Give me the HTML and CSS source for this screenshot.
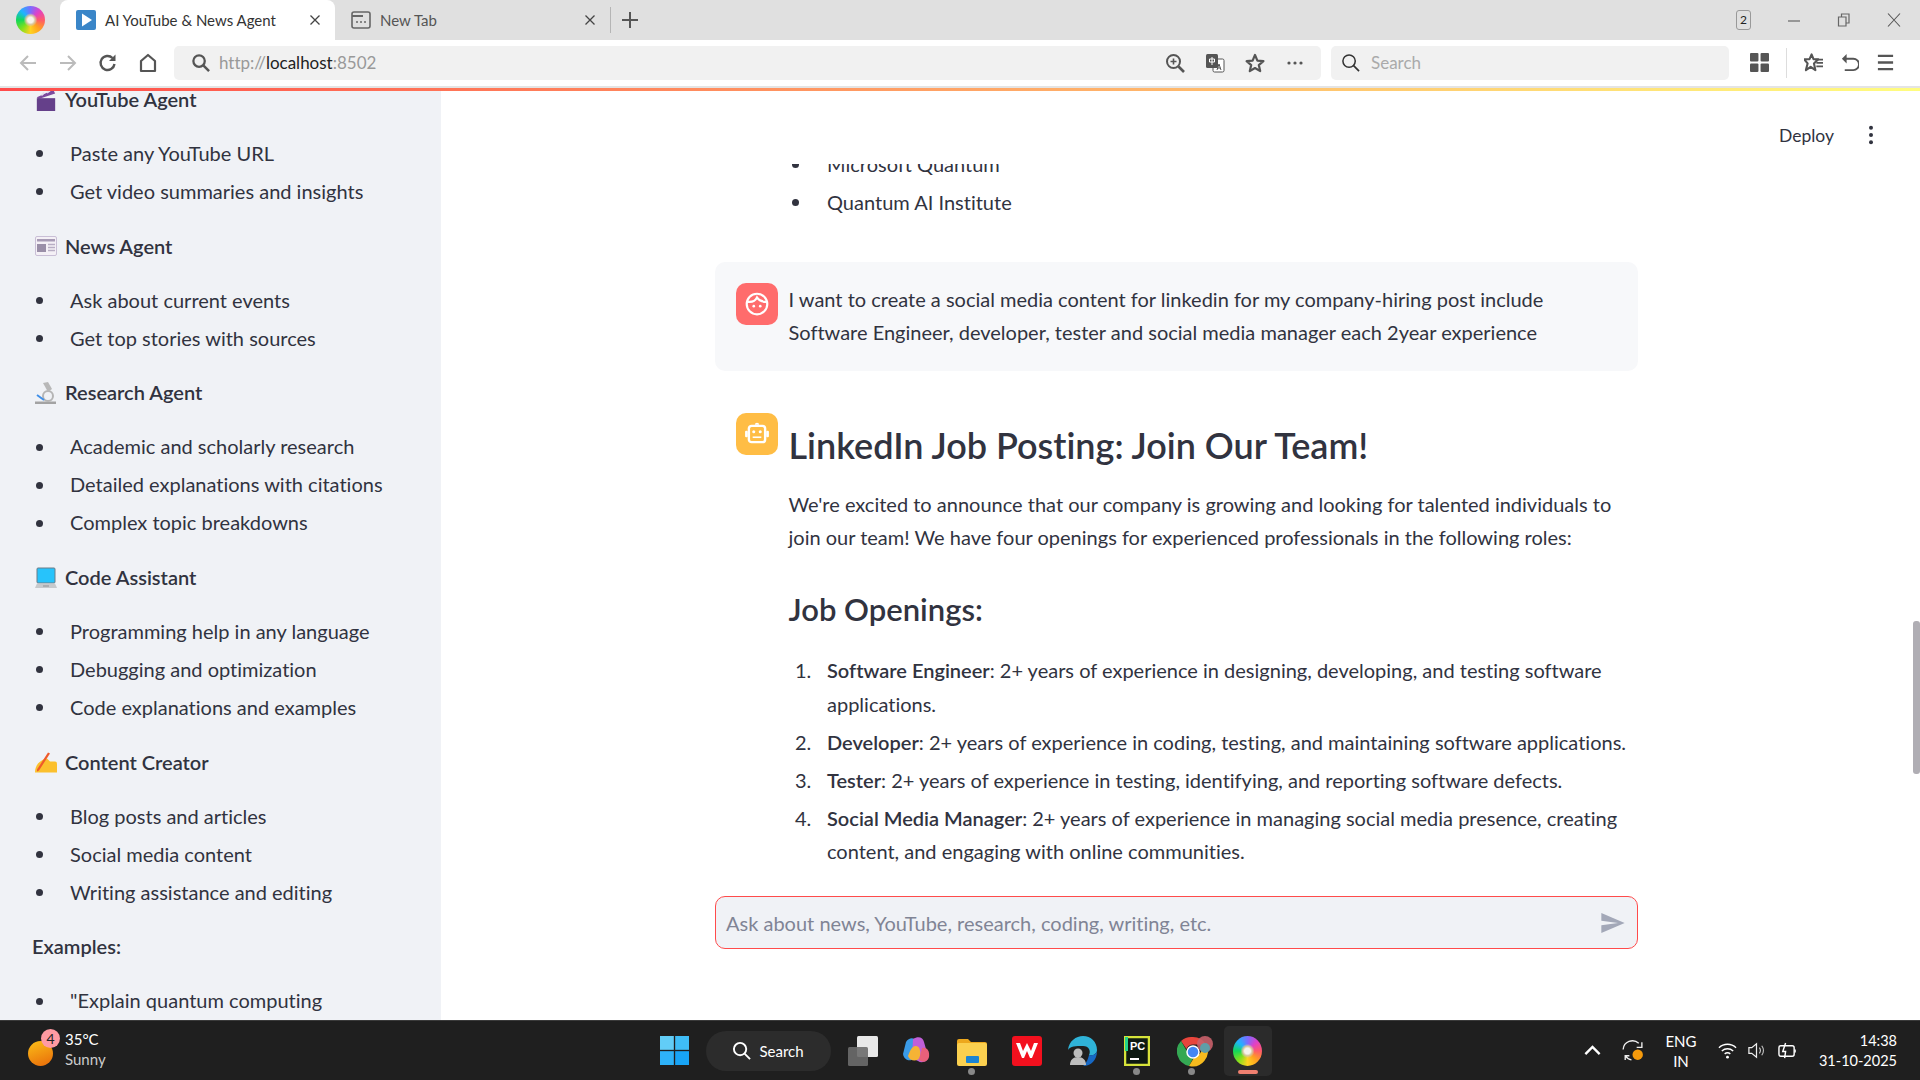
FILE: index.html

```html
<!DOCTYPE html>
<html lang="en">
<head>
    <meta charset="UTF-8">
    <title>AI YouTube &amp; News Agent</title>
    <link rel="stylesheet" href="styles.css">
</head>
<body>
    <div class="tabstrip">
        <div class="browser-logo"><div class="swirl"></div></div>
        <div class="tab tab-active">
            <svg class="tab-icon" viewBox="0 0 20 20"><rect width="20" height="20" rx="2" fill="#3a86c8"/><path d="M6 3.5 16 10 6 16.5z" fill="#fff"/></svg>
            <span class="tab-title">AI YouTube &amp; News Agent</span>
            <svg class="tab-close" viewBox="0 0 12 12"><path d="M1.5 1.5l9 9M10.5 1.5l-9 9" stroke="#444" stroke-width="1.3" fill="none"/></svg>
        </div>
        <div class="tab">
            <svg class="tab-icon" viewBox="0 0 20 20"><rect x="1" y="2" width="18" height="16" rx="2" fill="none" stroke="#666" stroke-width="1.6"/><path d="M1 6h11" stroke="#666" stroke-width="2"/><path d="M5 12h2M9 12h2M13 12h2" stroke="#666" stroke-width="1.6"/></svg>
            <span class="tab-title tab-title-dim">New Tab</span>
            <svg class="tab-close" viewBox="0 0 12 12"><path d="M1.5 1.5l9 9M10.5 1.5l-9 9" stroke="#444" stroke-width="1.3" fill="none"/></svg>
        </div>
        <div class="tab-sep"></div>
        <svg class="new-tab" viewBox="0 0 16 16"><path d="M8 0v16M0 8h16" stroke="#555" stroke-width="2"/></svg>
        <div class="window-controls">
            <span class="tab-count">2</span>
            <svg class="win-btn" viewBox="0 0 14 14"><path d="M1 8h12" stroke="#666" stroke-width="1.2"/></svg>
            <svg class="win-btn" viewBox="0 0 14 14"><path d="M1.5 4h7.5v9H1.5zM4.5 4V1h7.5v9H9" fill="none" stroke="#666" stroke-width="1.2"/></svg>
            <svg class="win-btn" viewBox="0 0 14 14"><path d="M1 .5l12 13M13 .5l-12 13" stroke="#555" stroke-width="1.1"/></svg>
        </div>
    </div>

    <div class="toolbar">
        <div class="nav-buttons">
            <svg class="nav-icon" viewBox="0 0 20 20"><path d="M18 10H3M10 3l-7 7 7 7" fill="none" stroke="#bbb" stroke-width="2"/></svg>
            <svg class="nav-icon" viewBox="0 0 20 20"><path d="M2 10h15M10 3l7 7-7 7" fill="none" stroke="#bbb" stroke-width="2"/></svg>
            <svg class="nav-icon" viewBox="0 0 20 20"><path d="M16.5 11a7 7 0 1 1-2-6" fill="none" stroke="#555" stroke-width="2.4"/><path d="M17.5 1.5v6.5h-6.5z" fill="#555"/></svg>
            <svg class="nav-icon" viewBox="0 0 20 20"><path d="M3 18V8l7-6 7 6v10z" fill="none" stroke="#555" stroke-width="2.2" stroke-linejoin="round"/></svg>
        </div>
        <div class="address-bar">
            <svg class="glass" viewBox="0 0 20 20"><circle cx="8.5" cy="8.5" r="6" fill="none" stroke="#555" stroke-width="2.4"/><path d="M13 13l6 6" stroke="#555" stroke-width="2.6"/></svg>
            <span class="url"><span class="url-dim">http://</span>localhost<span class="url-dim">:8502</span></span>
            <div class="address-icons">
                <svg class="addr-icon" viewBox="0 0 20 20"><circle cx="8.5" cy="8.5" r="6.5" fill="none" stroke="#555" stroke-width="2"/><path d="M13.5 13.5l5.5 5.5" stroke="#555" stroke-width="2.6"/><path d="M8.5 5.5v6M5.5 8.5h6" stroke="#555" stroke-width="1.6"/></svg>
                <svg class="addr-icon" viewBox="0 0 20 20"><rect x="8" y="6" width="11" height="13" rx="1.5" fill="#fff" stroke="#555"/><rect x="1" y="1" width="12" height="14" rx="1.5" fill="#555"/><path d="M7 4v8M4.5 6h5v3h-5z" fill="none" stroke="#fff"/><path d="M12 17l2-6 2 6M12.8 15h2.4" fill="none" stroke="#555"/></svg>
                <svg class="addr-icon" viewBox="0 0 20 20"><path d="M10 2l2.4 5.6 6 .5-4.6 4 1.4 6L10 15l-5.2 3.1 1.4-6-4.6-4 6-.5z" fill="none" stroke="#555" stroke-width="2.2" stroke-linejoin="round"/></svg>
                <svg class="addr-icon" viewBox="0 0 20 20"><circle cx="4" cy="10" r="1.6" fill="#555"/><circle cx="10" cy="10" r="1.6" fill="#555"/><circle cx="16" cy="10" r="1.6" fill="#555"/></svg>
            </div>
        </div>
        <div class="search-bar">
            <svg class="glass" viewBox="0 0 20 20"><circle cx="8.5" cy="8.5" r="6.5" fill="none" stroke="#333" stroke-width="1.6"/><path d="M13 13l6 6" stroke="#333" stroke-width="1.8"/></svg>
            <span class="search-text">Search</span>
        </div>
        <div class="tool-icons">
            <svg class="tool-icon" viewBox="0 0 18 18"><rect x="0" y="0" width="8" height="8" rx="1" fill="#555"/><rect x="10" y="0" width="8" height="8" rx="1" fill="#555"/><rect x="0" y="10" width="8" height="8" rx="1" fill="#555"/><rect x="10" y="10" width="8" height="8" rx="1" fill="#555"/></svg>
            <div class="tool-sep"></div>
            <svg class="tool-icon" viewBox="0 0 20 20"><path d="M8 1.500l2 5H15L10.500 11l1.500 7L7 14.500 2 18l1.800-7L0 6.500h5.800z" fill="none" stroke="#555" stroke-width="2.200" stroke-linejoin="round"/><path d="M12 7h8M13 10.500h7M13 14h7" stroke="#555" stroke-width="1.800"/></svg>
            <svg class="tool-icon" viewBox="0 0 20 20"><path d="M6 6h8a4.500 4.500 0 0 1 0 12H5" fill="none" stroke="#555" stroke-width="2"/><path d="M7 1L2 6l5 5z" fill="#555"/></svg>
            <svg class="tool-icon" viewBox="0 0 20 20"><path d="M2 3h16M2 10h16M2 17h16" stroke="#555" stroke-width="2.400"/></svg>
        </div>
    </div>
    <div class="decoration"></div>

    <div class="app">
        <aside class="sidebar">
            <div class="sidebar-inner">
                <h4 class="agent-title">
                    <svg class="emoji" viewBox="0 0 20 24"><path d="M0 9 18 1l2 4L2 11z" fill="#7c4a9e"/><path d="M5 7l3-3M11 4l3-2" stroke="#e6e0ee" stroke-width="2"/><rect y="10" width="20" height="14" fill="#65408a"/></svg>
                    YouTube Agent
                </h4>
                <ul class="side-list">
                    <li>Paste any YouTube URL</li>
                    <li>Get video summaries and insights</li>
                </ul>
                <h4 class="agent-title">
                    <svg class="emoji" viewBox="0 0 22 20"><rect x=".5" y=".5" width="21" height="19" rx="1.500" fill="#f4f0f6" stroke="#c9bfd6"/><rect x="2" y="3" width="18" height="2.500" fill="#a79bb5"/><rect x="2" y="8" width="9" height="8" fill="#9a8fa8"/><path d="M13 8.500h7M13 11.500h7M13 14.500h7" stroke="#b8aec4" stroke-width="1.500"/></svg>
                    News Agent
                </h4>
                <ul class="side-list">
                    <li>Ask about current events</li>
                    <li>Get top stories with sources</li>
                </ul>
                <h4 class="agent-title">
                    <svg class="emoji" viewBox="0 0 22 22"><rect y="19.500" width="21" height="2.500" fill="#a3a3a3"/><circle cx="13" cy="14" r="5" fill="none" stroke="#b5b5b5" stroke-width="2"/><path d="M8 1l5-1 4 7-4 3z" fill="#b8b8b8"/><path d="M2 13l7 5" stroke="#3f8fe8" stroke-width="2"/></svg>
                    Research Agent
                </h4>
                <ul class="side-list">
                    <li>Academic and scholarly research</li>
                    <li>Detailed explanations with citations</li>
                    <li>Complex topic breakdowns</li>
                </ul>
                <h4 class="agent-title">
                    <svg class="emoji" viewBox="0 0 22 21"><rect x="2" y=".5" width="18" height="15" rx="1" fill="#27c3fb" stroke="#6b7c88"/><path d="M2 16h18l2 4.500H0z" fill="#c6c9cc"/><path d="M8 18.500h6" stroke="#8d9196"/></svg>
                    Code Assistant
                </h4>
                <ul class="side-list">
                    <li>Programming help in any language</li>
                    <li>Debugging and optimization</li>
                    <li>Code explanations and examples</li>
                </ul>
                <h4 class="agent-title">
                    <svg class="emoji" viewBox="0 0 22 21"><path d="M3 12c3-3 6-5 9-5l3 3h5c1.500 0 2 1 2 3v8H0c0-4 1-6 3-9z" fill="#fbc02d"/><path d="M13 1l2 1L4 19l-2 1 0-2z" fill="#ef5a2a"/></svg>
                    Content Creator
                </h4>
                <ul class="side-list">
                    <li>Blog posts and articles</li>
                    <li>Social media content</li>
                    <li>Writing assistance and editing</li>
                </ul>
                <p class="examples-title">Examples:</p>
                <ul class="side-list">
                    <li>"Explain quantum computing</li>
                </ul>
            </div>
        </aside>

        <main class="main">
            <header class="app-header">
                <span class="deploy">Deploy</span>
                <svg class="kebab" viewBox="0 0 6 22"><circle cx="3" cy="3" r="2.200" fill="#31333f"/><circle cx="3" cy="11" r="2.200" fill="#31333f"/><circle cx="3" cy="19" r="2.200" fill="#31333f"/></svg>
            </header>

            <div class="chat-scroll">
                <div class="chat">
                    <ul class="chat-tail">
                        <li>Microsoft Quantum</li>
                        <li>Quantum AI Institute</li>
                    </ul>

                    <div class="message message-user">
                        <div class="avatar avatar-user">
                            <svg viewBox="0 0 24 24"><circle cx="12" cy="12" r="9.500" fill="none" stroke="#fff" stroke-width="2"/><path d="M3.500 10c4 .5 7-1 8.500-4 1.500 2.500 4.500 4 8.500 4" fill="none" stroke="#fff" stroke-width="2"/><circle cx="9" cy="14" r="1.200" fill="#fff"/><circle cx="15" cy="14" r="1.200" fill="#fff"/></svg>
                        </div>
                        <div class="message-body">
                            <p>I want to create a social media content for linkedin for my company-hiring post include Software Engineer, developer, tester and social media manager each 2year experience</p>
                        </div>
                    </div>

                    <div class="message">
                        <div class="avatar avatar-bot">
                            <svg viewBox="0 0 24 24"><path d="M12 1.500a2 2 0 0 1 2 2H10a2 2 0 0 1 2-2z" fill="#fff"/><rect x="4.500" y="4.500" width="15" height="15" rx="2.500" fill="none" stroke="#fff" stroke-width="2.200"/><rect x="1" y="9" width="2.500" height="6" rx="1" fill="#fff"/><rect x="20.500" y="9" width="2.500" height="6" rx="1" fill="#fff"/><circle cx="9" cy="10" r="1.400" fill="#fff"/><circle cx="15" cy="10" r="1.400" fill="#fff"/><path d="M8 15h8" stroke="#fff" stroke-width="1.500"/></svg>
                        </div>
                        <div class="message-body">
                            <h2 class="post-title">LinkedIn Job Posting: Join Our Team!</h2>
                            <p>We're excited to announce that our company is growing and looking for talented individuals to join our team! We have four openings for experienced professionals in the following roles:</p>
                            <h3 class="post-subtitle">Job Openings:</h3>
                            <ol class="job-list">
                                <li><div><strong>Software Engineer</strong>: 2+ years of experience in designing, developing, and testing software applications.</div></li>
                                <li><div><strong>Developer</strong>: 2+ years of experience in coding, testing, and maintaining software applications.</div></li>
                                <li><div><strong>Tester</strong>: 2+ years of experience in testing, identifying, and reporting software defects.</div></li>
                                <li><div><strong>Social Media Manager</strong>: 2+ years of experience in managing social media presence, creating content, and engaging with online communities.</div></li>
                            </ol>
                        </div>
                    </div>
                </div>
            </div>

            <div class="input-dock">
                <div class="chat-input">
                    <span class="placeholder">Ask about news, YouTube, research, coding, writing, etc.</span>
                    <svg class="send" viewBox="2 3 21 18"><path d="M2.010 21L23 12 2.010 3 2 10l15 2-15 2z" fill="#a3a8b8"/></svg>
                </div>
            </div>

            <div class="scroll-thumb"></div>
        </main>
    </div>

    <footer class="taskbar">
        <div class="task-left">
            <div class="weather-icon"><span class="weather-badge">4</span></div>
            <div class="weather-text">
                <span>35°C</span>
                <span class="weather-sub">Sunny</span>
            </div>
        </div>
        <div class="task-center">
            <svg class="start" viewBox="0 0 30 30"><rect width="14.300" height="14.300" fill="#62cdf7"/><rect x="15.700" width="14.300" height="14.300" fill="#3fbdf7"/><rect y="15.700" width="14.300" height="14.300" fill="#2eb2f8"/><rect x="15.700" y="15.700" width="14.300" height="14.300" fill="#18a4f6"/></svg>
            <div class="task-search">
                <svg viewBox="0 0 20 20"><circle cx="8.500" cy="8.500" r="6.500" fill="none" stroke="#fff" stroke-width="2"/><path d="M13 13l6 6" stroke="#fff" stroke-width="2"/></svg>
                <span>Search</span>
            </div>
            <svg class="task-app task-view" viewBox="0 0 30 30"><rect x="9" width="21" height="21" rx="1.500" fill="#e8e8e8"/><rect y="11" width="20" height="19" rx="1.500" fill="#6b6b6b" opacity=".9"/></svg>
            <div class="task-slot">
                <svg class="task-app" viewBox="0 0 30 30"><path d="M4 6c3-5 9-5 10 0l-3 16c-1 4-9 3-10-4z" fill="#3a9be8"/><path d="M11 3c5-3 10-2 11 3l4 14c1 5-6 8-10 5l-6-3z" fill="#c05fd8"/><path d="M6 20c3-8 5-10 8-10s5 4 4 10-10 6-12 0z" fill="#f5b335"/><path d="M20 12c4-1 8 2 7 9-1 5-7 6-10 3z" fill="#e8607a"/></svg>
            </div>
            <div class="task-slot task-running">
                <svg class="task-app" viewBox="0 0 30 30"><path d="M0 5a2 2 0 0 1 2-2h9l3 3h14a2 2 0 0 1 2 2v3H0z" fill="#eda81d"/><rect y="7" width="30" height="23" rx="2" fill="#fbd04f"/><rect x="9" y="20" width="13" height="7" rx="1" fill="#1b84d3"/></svg>
            </div>
            <div class="task-slot">
                <svg class="task-app" viewBox="0 0 30 30"><rect width="30" height="30" rx="3" fill="#f3101e"/><path d="M4 7l4 0 3 8 4-8 4 8 3-8 4 0-6 15h-2l-3-7-3 7h-2z" fill="#fff"/></svg>
            </div>
            <div class="task-slot">
                <svg class="task-app" viewBox="0 0 30 30"><path d="M1 14C2 5 9 0 16 0c8 0 14 6 14 14 0 4-4 6-8 5 2-4 0-9-6-9-7 0-13 0-15 4z" fill="#2fb3d8"/><path d="M22 19c3 1 7 0 8-4 0 9-6 15-14 15 2-1 5-6 6-11z" fill="#1668c4"/><circle cx="11" cy="17" r="4.500" fill="#bdbdbd"/><path d="M3 29c0-5 3-8 8-8s8 3 8 8z" fill="#bdbdbd"/></svg>
            </div>
            <div class="task-slot task-running">
                <svg class="task-app task-app-small" viewBox="0 0 26 30"><rect x="1" y="1" width="24" height="28" fill="#0e1a12" stroke="#d6e33a" stroke-width="2.500"/><rect x="1" y="1" width="3" height="14" fill="#22d48a"/><text x="6" y="14" font-size="11" font-weight="700" fill="#fff" font-family="Liberation Sans, sans-serif">PC</text><path d="M6 23h9" stroke="#fff" stroke-width="2"/></svg>
            </div>
            <div class="task-slot task-running">
                <svg class="task-app task-app-wide" viewBox="0 0 36 36"><path d="M16 4a15 15 0 0 1 13 7.500H16a7 7 0 0 0-6.500 4.500L4 8a15 15 0 0 1 12-4z" fill="#e8453c"/><path d="M4 8l7 12a7 7 0 0 0 6 3.500L12 33A15 15 0 0 1 4 8z" fill="#34a853"/><path d="M29 11.500A15 15 0 0 1 12 33l6-10a7 7 0 0 0 5-11.500z" fill="#f6bb1e"/><circle cx="16" cy="19" r="6" fill="#4285f4" stroke="#fff" stroke-width="1.500"/><circle cx="28" cy="11" r="8" fill="#c9606a" opacity=".9"/><circle cx="28" cy="15" r="5" fill="#5f9ea8"/></svg>
            </div>
            <div class="task-slot task-active">
                <div class="swirl swirl-task"></div>
                <div class="task-active-bar"></div>
            </div>
        </div>
        <div class="task-right">
            <svg class="tray-icon" viewBox="0 0 16 16"><path d="M2 11l6-6 6 6" fill="none" stroke="#fff" stroke-width="2"/></svg>
            <svg class="tray-sync" viewBox="0 0 24 24"><path d="M3 11a9 9 0 0 1 15-6M21 4v5h-5" fill="none" stroke="#eee" stroke-width="1.300"/><path d="M5 21v-4h4M5 17a9 9 0 0 0 6 4" fill="none" stroke="#eee" stroke-width="1.300"/><circle cx="17" cy="16" r="5" fill="#f59a0c"/></svg>
            <div class="lang"><span>ENG</span><span>IN</span></div>
            <svg class="tray-icon tray-wifi" viewBox="0 0 20 20"><path d="M1 7a13 13 0 0 1 18 0M4 10.500a9 9 0 0 1 12 0M7 13.500a5 5 0 0 1 6 0" fill="none" stroke="#fff" stroke-width="1.500"/><circle cx="10" cy="17" r="1.500" fill="#fff"/></svg>
            <svg class="tray-icon tray-sound" viewBox="0 0 20 20"><path d="M2 7v6h3l5 4V3L5 7z" fill="none" stroke="#eee" stroke-width="1.300"/><path d="M13 7a5 5 0 0 1 0 6M15.500 5a8 8 0 0 1 0 10" fill="none" stroke="#ccc" stroke-width="1.200"/></svg>
            <svg class="tray-icon tray-battery" viewBox="0 0 20 20"><rect x="1" y="5" width="16" height="11" rx="2" fill="none" stroke="#fff" stroke-width="1.500"/><path d="M18 9v3" stroke="#fff" stroke-width="1.500"/><path d="M8 2L5 11h3l-1 7" fill="none" stroke="#fff" stroke-width="1.500"/></svg>
            <div class="clock"><span>14:38</span><span>31-10-2025</span></div>
        </div>
    </footer>
</body>
</html>
```

FILE: styles.css

```css
* {
    box-sizing: border-box;
}
html, body {
    height: 100%;
}
body {
    margin: 0;
    display: flex;
    flex-direction: column;
    height: 1080px;
    overflow: hidden;
    font-family: Lato, "Noto Sans", sans-serif;
    font-variant-ligatures: none;
    color: #31333f;
    background: #fff;
}

/* browser chrome */
.tabstrip {
    height: 40px;
    flex: none;
    display: flex;
    align-items: center;
    background: #e0e0e0;
    padding-right: 19px;
}
.browser-logo {
    width: 60px;
    display: flex;
    justify-content: center;
    padding-left: 1px;
}
.swirl {
    width: 29px;
    height: 28px;
    border-radius: 50%;
    background:
        radial-gradient(circle, #f6f3ec 0 14%, #d9c8a0 22%, transparent 34%),
        conic-gradient(#7a6cff, #e040c8, #ff5a6a, #ffa020, #ffd21f, #7ee01e, #12d85a, #1fb4ff, #7a6cff);
}
.tab {
    width: 275px;
    height: 40px;
    display: flex;
    align-items: center;
    padding: 0 14px 0 16px;
}
.tab-active {
    background: #fff;
    border-radius: 8px 8px 0 0;
}
.tab-icon {
    width: 20px;
    height: 20px;
    margin-right: 9px;
    flex: none;
}
.tab-title {
    flex: 1;
    font-size: 15px;
    color: #333;
}
.tab-title-dim {
    color: #555;
}
.tab-close {
    width: 12px;
    height: 12px;
}
.tab-sep {
    width: 1px;
    height: 26px;
    background: #b5b5b5;
}
.new-tab {
    width: 16px;
    height: 16px;
    margin-left: 11px;
}
.window-controls {
    margin-left: auto;
    display: flex;
    align-items: center;
    gap: 36px;
}
.tab-count {
    width: 15px;
    height: 20px;
    border: 1.500px solid #999;
    border-radius: 3px;
    font-size: 12px;
    line-height: 17px;
    text-align: center;
    color: #222;
}
.win-btn {
    width: 14px;
    height: 14px;
}

.toolbar {
    height: 48px;
    flex: none;
    display: flex;
    align-items: center;
    padding: 0 22px 1px 18px;
    background: #fff;
    border-bottom: 2px solid #e4e4e4;
}
.nav-buttons {
    width: 156px;
    display: flex;
    gap: 20px;
}
.nav-icon {
    width: 20px;
    height: 20px;
}
.address-bar, .search-bar {
    height: 34px;
    display: flex;
    align-items: center;
    background: #f1f1f1;
    border-radius: 5px;
}
.address-bar {
    width: 1147px;
    padding: 0 16px 0 17px;
}
.search-bar {
    width: 398px;
    margin-left: 10px;
    padding: 0 10px;
}
.glass {
    width: 19px;
    height: 19px;
    flex: none;
}
.url {
    margin-left: 9px;
    font-size: 17px;
    color: #222;
}
.url-dim {
    color: #999;
}
.address-icons {
    margin-left: auto;
    display: flex;
    gap: 20px;
}
.addr-icon {
    width: 20px;
    height: 20px;
}
.search-text {
    margin-left: 11px;
    font-size: 17px;
    color: #aaa;
}
.tool-icons {
    margin-left: 21px;
    display: flex;
    align-items: center;
    gap: 17px;
}
.tool-icon {
    width: 19px;
    height: 19px;
}
.tool-sep {
    width: 1px;
    height: 30px;
    background: #ddd;
}
.decoration {
    height: 3px;
    flex: none;
    background: linear-gradient(90deg, #ff4b4b, #fffd80);
}

/* streamlit app */
.app {
    flex: 1;
    min-height: 0;
    display: flex;
}
.sidebar {
    width: 441px;
    flex: none;
    overflow: hidden;
    background: #f0f2f6;
}
.sidebar-inner {
    margin-top: -8px;
    padding-left: 32px;
    font-size: 20px;
    line-height: 33.6px;
}
.agent-title {
    margin: 0 0 20.500px;
    display: flex;
    align-items: center;
    gap: 8px;
    font-size: 20px;
    font-weight: 600;
}
.emoji {
    width: 22px;
    height: 22px;
    flex: none;
    margin-left: 3px;
}
.side-list {
    margin: 0 0 21px;
    padding: 0;
    list-style: none;
}
.side-list li {
    display: flex;
    align-items: center;
    margin-bottom: 4.400px;
}
.side-list li::before {
    content: "";
    width: 7px;
    height: 7px;
    flex: none;
    margin: 0 27px 0 4px;
    border-radius: 50%;
    background: #31333f;
}
.examples-title {
    margin: 0 0 20.500px;
    font-weight: 600;
}

.main {
    flex: 1;
    min-width: 0;
    position: relative;
    display: flex;
    flex-direction: column;
    background: #fff;
}
.app-header {
    height: 73px;
    flex: none;
    display: flex;
    align-items: center;
    justify-content: flex-end;
    gap: 34px;
    padding: 15px 46px 0 0;
}
.deploy {
    font-size: 17.500px;
    color: #31333f;
}
.kebab {
    width: 6px;
    height: 20px;
}
.chat-scroll {
    flex: 1;
    min-height: 0;
    overflow: hidden;
    padding-right: 8px;
}
.chat {
    width: 923px;
    margin: -16px auto 0;
    font-size: 20px;
    line-height: 33.6px;
}
.chat-tail {
    margin: 0;
    padding: 0;
    list-style: none;
}
.chat-tail li {
    display: flex;
    align-items: center;
    margin-bottom: 4.400px;
}
.chat-tail li::before {
    content: "";
    width: 7px;
    height: 7px;
    flex: none;
    margin: 0 28px 0 77px;
    border-radius: 50%;
    background: #31333f;
}
.message {
    display: flex;
    gap: 10.500px;
    padding: 21px;
    border-radius: 10px;
}
.message-user {
    background: #f7f8fa;
    margin: 42px 0 21px;
}
.message-body {
    flex: 1;
    min-width: 0;
}
.message-body p {
    margin: 0;
}
.avatar {
    width: 42px;
    height: 42px;
    flex: none;
    display: flex;
    align-items: center;
    justify-content: center;
    border-radius: 10px;
}
.avatar svg {
    width: 26px;
    height: 26px;
}
.avatar-user {
    background: #ff6c6c;
}
.avatar-bot {
    background: #ffbd45;
}
.post-title {
    margin: 9px 0 20px;
    font-size: 36px;
    line-height: 46px;
    font-weight: 600;
}
.post-subtitle {
    margin: 34px 0 25px;
    font-size: 31px;
    line-height: 40px;
    font-weight: 600;
}
.job-list {
    margin: 0 -15px 0 0;
    padding: 0 0 0 6.500px;
    list-style: none;
    counter-reset: job;
}
.job-list li {
    display: grid;
    grid-template-columns: 32px 1fr;
    margin-bottom: 4.400px;
    counter-increment: job;
}
.job-list li::before {
    content: counter(job) ".";
}
.job-list strong {
    font-weight: 600;
}
.input-dock {
    height: 144px;
    flex: none;
    padding: 20px 8px 0 0;
    display: flex;
    justify-content: center;
    align-items: flex-start;
}
.chat-input {
    width: 923px;
    height: 53px;
    display: flex;
    align-items: center;
    justify-content: space-between;
    padding: 0 12px 0 10px;
    background: #f0f2f6;
    border: 1px solid #ff4b4b;
    border-radius: 10px;
}
.placeholder {
    font-size: 20px;
    color: #808495;
}
.send {
    width: 24px;
    height: 20px;
}
.scroll-thumb {
    position: absolute;
    right: 0;
    top: 530px;
    width: 7px;
    height: 153px;
    border-radius: 3px;
    background: #b0aeb4;
}

/* windows taskbar */
.taskbar {
    height: 60px;
    flex: none;
    display: grid;
    grid-template-columns: 1fr auto 1fr;
    align-items: center;
    background: #1f1f1f;
    border-top: 1px solid #3a3a3a;
    color: #fff;
}
.task-left {
    display: flex;
    align-items: center;
    gap: 12px;
    padding-left: 28px;
}
.weather-icon {
    width: 25px;
    height: 25px;
    margin-top: 6px;
    position: relative;
    border-radius: 50%;
    background: linear-gradient(160deg, #fbbf18, #e86a0a);
}
.weather-badge {
    position: absolute;
    top: -12px;
    right: -7px;
    width: 19px;
    height: 19px;
    border-radius: 50%;
    background: #ff9aa2;
    color: #222;
    font-size: 14px;
    line-height: 19px;
    text-align: center;
}
.weather-text {
    display: flex;
    flex-direction: column;
    margin-top: -3px;
    font-size: 15px;
    line-height: 20px;
}
.weather-sub {
    color: #ccc;
}
.task-center {
    display: flex;
    align-items: center;
    justify-content: center;
    padding-left: 11px;
}
.start {
    width: 29px;
    height: 29px;
}
.task-search {
    width: 125px;
    height: 40px;
    margin: 0 17px;
    display: flex;
    align-items: center;
    justify-content: center;
    gap: 8px;
    border-radius: 20px;
    background: #2c2c2c;
    font-size: 15px;
}
.task-search svg {
    width: 19px;
    height: 19px;
}
.task-view {
    margin-right: 12px;
}
.task-app {
    width: 30px;
    height: 30px;
    display: block;
}
.task-app-small {
    width: 26px;
}
.task-app-wide {
    width: 36px;
    height: 36px;
    margin-left: 5px;
}
.task-slot {
    width: 55px;
    height: 50px;
    position: relative;
    display: flex;
    align-items: center;
    justify-content: center;
}
.task-running::after {
    content: "";
    position: absolute;
    bottom: 1px;
    left: 50%;
    width: 7px;
    height: 7px;
    margin-left: -4px;
    border-radius: 50%;
    background: #888;
}
.task-active {
    width: 48px;
    margin-left: 4px;
    border-radius: 5px;
    background: #2b2b2b;
}
.swirl-task {
    width: 29px;
    height: 30px;
}
.task-active-bar {
    position: absolute;
    bottom: 2px;
    left: 14px;
    width: 20px;
    height: 4px;
    border-radius: 2px;
    background: #f08070;
}
.task-right {
    display: flex;
    align-items: center;
    justify-content: flex-end;
    padding-right: 23px;
}
.tray-icon {
    width: 19px;
    height: 19px;
}
.tray-sync {
    width: 25px;
    height: 25px;
    margin-left: 18px;
}
.lang {
    width: 40px;
    margin-left: 16px;
    display: flex;
    flex-direction: column;
    align-items: center;
    font-size: 15px;
    line-height: 20px;
}
.tray-wifi {
    margin-left: 17px;
}
.tray-sound {
    margin-left: 10px;
}
.tray-battery {
    margin-left: 12px;
}
.clock {
    width: 80px;
    margin-left: 20px;
    display: flex;
    flex-direction: column;
    align-items: flex-end;
    font-size: 14.500px;
    line-height: 20px;
    white-space: nowrap;
}
```
